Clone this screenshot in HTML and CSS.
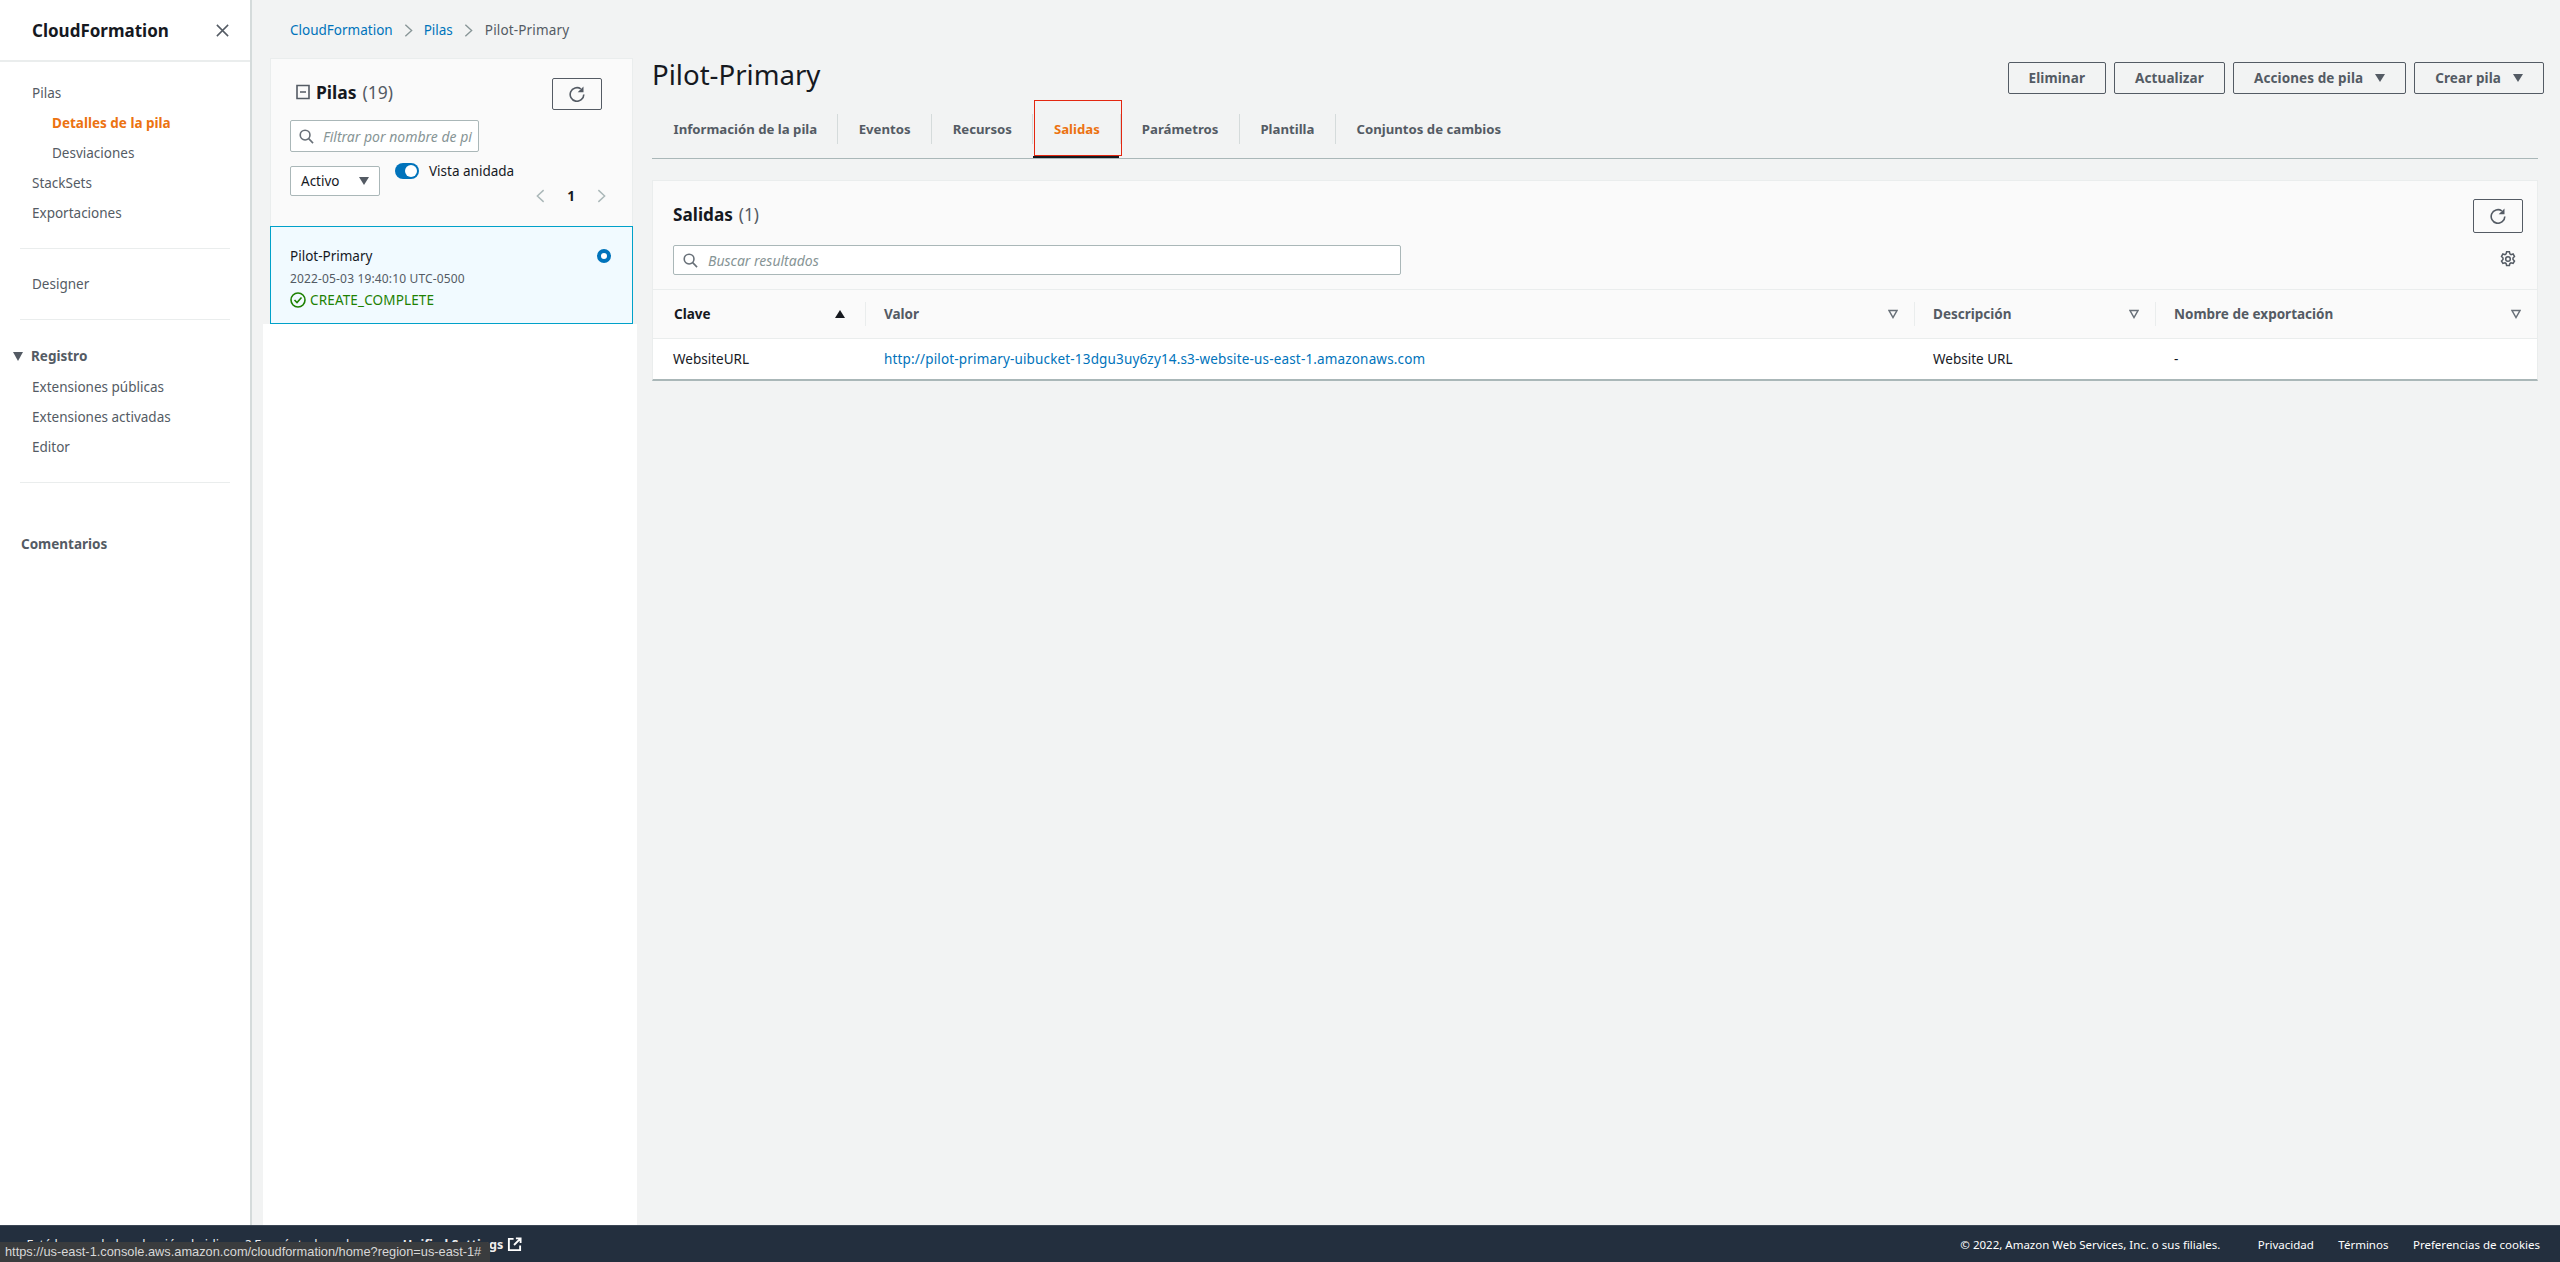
FILE: index.html
```html
<!DOCTYPE html>
<html lang="es">
<head>
<meta charset="utf-8">
<title>CloudFormation - Pilot-Primary</title>
<link rel="stylesheet" href="styles.css">
</head>
<body>
<div class="app">
  <div class="main">
    <aside class="side">
      <div class="side-head">
        <span class="side-title">CloudFormation</span>
        <svg class="close" viewBox="0 0 16 16"><path d="M2 2l12 12M14 2L2 14"/></svg>
      </div>
      <nav class="side-nav">
        <a class="nav-item">Pilas</a>
        <a class="nav-item sub active">Detalles de la pila</a>
        <a class="nav-item sub">Desviaciones</a>
        <a class="nav-item">StackSets</a>
        <a class="nav-item">Exportaciones</a>
        <hr class="nav-div">
        <a class="nav-item">Designer</a>
        <hr class="nav-div">
        <div class="nav-group"><span class="tri"></span>Registro</div>
        <a class="nav-item">Extensiones públicas</a>
        <a class="nav-item">Extensiones activadas</a>
        <a class="nav-item">Editor</a>
        <hr class="nav-div third">
        <div class="nav-feedback">Comentarios</div>
      </nav>
    </aside>
    <div class="content">
      <div class="crumbs">
        <a class="link">CloudFormation</a>
        <svg class="crumb-sep" viewBox="0 0 10 16"><path d="M1.500 1.500L8.500 8l-7 6.500"/></svg>
        <a class="link">Pilas</a>
        <svg class="crumb-sep" viewBox="0 0 10 16"><path d="M1.500 1.500L8.500 8l-7 6.500"/></svg>
        <span class="crumb-now">Pilot-Primary</span>
      </div>
      <div class="columns">
        <section class="stacks">
          <div class="stacks-head">
            <div class="stacks-top">
              <h2 class="stacks-title">
                <svg class="collapse" viewBox="0 0 14 16"><path d="M1 1.500h12v13H1zM4 8h6"/></svg>
                <b>Pilas</b><span class="count">(19)</span>
              </h2>
              <button class="icon-btn stack-refresh">
                <svg class="refresh" viewBox="0 0 16 16"><path d="M14.800 8.500A6.800 6.800 0 1 1 11.800 2.800"/><path class="fill" d="M14.500 .5v5.800H8.700z"/></svg>
              </button>
            </div>
            <div class="field filter">
              <svg class="search" viewBox="0 0 16 16"><circle cx="6.500" cy="6.500" r="5.200"/><path d="M10.300 10.300L15 15"/></svg>
              <span class="placeholder">Filtrar por nombre de pi</span>
            </div>
            <div class="controls">
              <div class="field select">Activo<span class="tri"></span></div>
              <div class="toggle-col">
                <div class="toggle-row"><span class="toggle"></span>Vista anidada</div>
                <div class="pager">
                  <svg class="pg" viewBox="0 0 10 16"><path d="M8.500 1.500L1.500 8l7 6.500"/></svg>
                  <b>1</b>
                  <svg class="pg" viewBox="0 0 10 16"><path d="M1.500 1.500L8.500 8l-7 6.500"/></svg>
                </div>
              </div>
            </div>
          </div>
          <div class="stack-item">
            <div class="item-name"><span>Pilot-Primary</span><span class="radio"></span></div>
            <div class="item-date">2022-05-03 19:40:10 UTC-0500</div>
            <div class="item-status">
              <svg class="ok" viewBox="0 0 16 16"><circle cx="8" cy="8" r="7"/><path d="M4.500 8l2.500 2.500L11.500 5.500"/></svg>
              CREATE_COMPLETE
            </div>
          </div>
          <div class="stacks-blank"></div>
        </section>
        <section class="detail">
          <div class="page-head">
            <h1 class="page-title">Pilot-Primary</h1>
            <div class="actions">
              <button class="btn">Eliminar</button>
              <button class="btn">Actualizar</button>
              <button class="btn">Acciones de pila<span class="tri"></span></button>
              <button class="btn">Crear pila<span class="tri"></span></button>
            </div>
          </div>
          <div class="tabs">
            <a class="tab first">Información de la pila</a>
            <a class="tab">Eventos</a>
            <a class="tab">Recursos</a>
            <a class="tab on">Salidas<span class="red-box"></span></a>
            <a class="tab">Parámetros</a>
            <a class="tab">Plantilla</a>
            <a class="tab last">Conjuntos de cambios</a>
          </div>
          <div class="card">
            <div class="card-head">
              <div class="card-left">
                <h2 class="card-title"><b>Salidas</b><span class="count">(1)</span></h2>
                <div class="field result-search">
                  <svg class="search" viewBox="0 0 16 16"><circle cx="6.500" cy="6.500" r="5.200"/><path d="M10.300 10.300L15 15"/></svg>
                  <span class="placeholder">Buscar resultados</span>
                </div>
              </div>
              <div class="card-right">
                <button class="icon-btn card-refresh">
                  <svg class="refresh" viewBox="0 0 16 16"><path d="M14.800 8.500A6.800 6.800 0 1 1 11.800 2.800"/><path class="fill" d="M14.500 .5v5.800H8.700z"/></svg>
                </button>
                <svg class="gear" viewBox="0 0 16 16"><circle cx="8" cy="8" r="2.300"/><path d="M6.600 .8h2.800l.5 2.100 1.100.7 2.100-.6 1.400 2.400-1.500 1.600v1.400l1.500 1.600-1.400 2.400-2.100-.6-1.100.7-.5 2.100H6.600l-.5-2.100-1.100-.7-2.100.6L1.500 10l1.500-1.600V7L1.500 5.400l1.400-2.400 2.100.6 1.100-.7z"/></svg>
              </div>
            </div>
            <div class="table">
              <div class="cell th dark">Clave<span class="sort"></span></div>
              <div class="cell th sep">Valor<svg class="filt" viewBox="0 0 10 10"><path d="M1 1.500h8L5 8.500z"/></svg></div>
              <div class="cell th sep">Descripción<svg class="filt" viewBox="0 0 10 10"><path d="M1 1.500h8L5 8.500z"/></svg></div>
              <div class="cell th sep">Nombre de exportación<svg class="filt" viewBox="0 0 10 10"><path d="M1 1.500h8L5 8.500z"/></svg></div>
              <div class="cell td key">WebsiteURL</div>
              <div class="cell td"><a class="link url">http://pilot-primary-uibucket-13dgu3uy6zy14.s3-website-us-east-1.amazonaws.com</a></div>
              <div class="cell td">Website URL</div>
              <div class="cell td">-</div>
            </div>
          </div>
        </section>
      </div>
    </div>
  </div>
  <footer class="foot">
    <div class="foot-left">¿Está buscando la selección de idioma? Encuéntrela en la nueva <b>Unified Settings</b>
      <svg class="ext" viewBox="0 0 16 16"><path d="M7 2H2v12h12V9M9.500 1.500h5v5M14 2L7.500 8.500"/></svg>
    </div>
    <div class="foot-right">
      <span class="copy">© 2022, Amazon Web Services, Inc. o sus filiales.</span>
      <a>Privacidad</a>
      <a>Términos</a>
      <a>Preferencias de cookies</a>
    </div>
    <div class="status-url">https://us-east-1.console.aws.amazon.com/cloudformation/home?region=us-east-1#</div>
  </footer>
</div>
</body>
</html>
```

FILE: styles.css
```css
* { box-sizing: border-box; }
html, body { margin: 0; height: 100%; }
body { font-family: "Noto Sans", Roboto, "Liberation Sans", sans-serif; font-size: 13.5px; color: #16191f; background: #f2f3f3; }
svg { display: block; flex: none; }
h1, h2 { margin: 0; font-weight: 400; }
.app { height: 1262px; display: flex; flex-direction: column; overflow: hidden; }
.main { flex: 1; display: flex; min-height: 0; }
.link { color: #0073bb; }
.url { letter-spacing: .16px; }

.side { width: 252px; flex: none; background: #fff; border-right: 2px solid #d5dbdb; }
.side-head { height: 62px; padding: 0 20px 0 32px; display: flex; align-items: center; justify-content: space-between; border-bottom: 2px solid #eaeded; }
.side-title { font-size: 17px; font-weight: 700; color: #16191f; }
.close { width: 15px; height: 15px; fill: none; stroke: #545b64; stroke-width: 1.600; }
.side-nav { padding-top: 16px; display: flex; flex-direction: column; }
.nav-item { height: 30px; line-height: 30px; padding-left: 32px; color: #545b64; }
.nav-item.sub { padding-left: 52px; }
.nav-item.active { color: #ec7211; font-weight: 700; }
.nav-div { width: 210px; margin: 20px 0 20px 20px; border: 0; border-top: 1px solid #eaeded; height: 1px; flex: none; }
.nav-div.third { margin-bottom: 46px; }
.nav-group { height: 30px; display: flex; align-items: center; gap: 8px; padding-left: 13px; font-weight: 700; color: #545b64; margin: 1px 0; }
.nav-group .tri { margin: 0; }
.nav-feedback { height: 30px; line-height: 30px; padding-left: 21px; font-weight: 700; color: #545b64; }
.tri { display: inline-block; width: 0; height: 0; border-left: 5px solid transparent; border-right: 5px solid transparent; border-top: 9px solid #545b64; }

.content { flex: 1; min-width: 0; display: flex; flex-direction: column; }
.crumbs { height: 58px; padding: 2px 0 0 38px; display: flex; align-items: center; gap: 11px; color: #545b64; }
.crumb-sep { width: 9px; height: 15px; fill: none; stroke: #879596; stroke-width: 1.500; }
.crumb-now { margin-left: 1px; letter-spacing: .15px; }
.columns { flex: 1; display: flex; min-height: 0; padding-left: 11px; }

.stacks { width: 374px; flex: none; display: flex; flex-direction: column; }
.stacks-head { margin: 0 4px 0 7px; height: 168px; padding: 19px 30px 0 19px; background: #fafafa; border: 1px solid #eaeded; border-bottom: 0; }
.stacks-top { display: flex; justify-content: space-between; align-items: flex-start; }
.stacks-title { display: flex; align-items: center; gap: 6px; padding: 2px 0 0 6px; font-size: 17.5px; line-height: 24px; }
.count { color: #545b64; }
.collapse { width: 14px; height: 16px; fill: none; stroke: #545b64; stroke-width: 1.600; }
.icon-btn { padding: 0; background: #fff0; border: 1px solid #545b64; border-radius: 2px; display: flex; align-items: center; justify-content: center; }
.stack-refresh { width: 50px; height: 32px; }
.card-refresh { width: 50px; height: 34px; }
.refresh { width: 16px; height: 16px; fill: none; stroke: #545b64; stroke-width: 1.600; }
.refresh .fill { fill: #545b64; stroke: none; }
.field { background: #fff; border: 1px solid #aab7b8; border-radius: 2px; display: flex; align-items: center; }
.filter { width: 189px; height: 32px; margin-top: 10px; padding: 0 8px; gap: 9px; }
.search { width: 15px; height: 15px; fill: none; stroke: #687078; stroke-width: 1.700; }
.placeholder { color: #879596; font-style: italic; font-size: 14px; white-space: nowrap; }
.controls { display: flex; gap: 15px; margin-top: 11px; }
.select { width: 90px; height: 30px; margin-top: 3px; padding: 0 10px; justify-content: space-between; }
.select .tri { border-top-width: 8px; }
.toggle-col { flex: 1; }
.toggle-row { display: flex; align-items: center; gap: 10px; height: 16px; }
.toggle { position: relative; width: 24px; height: 16px; border-radius: 8px; background: #0073bb; }
.toggle::after { content: ""; position: absolute; right: 2px; top: 2px; width: 12px; height: 12px; border-radius: 50%; background: #fff; }
.pager { display: flex; justify-content: flex-end; align-items: center; gap: 22px; margin: 8px -4px 0 0; }
.pager b { font-size: 13.5px; }
.pg { width: 9px; height: 16px; fill: none; stroke: #aab7b8; stroke-width: 1.600; }

.stack-item { margin: 0 4px 0 7px; height: 98px; padding: 19px 12px 0 19px; background: #f1faff; border: 1px solid #00a1c9; }
.item-name { display: flex; justify-content: space-between; align-items: center; height: 20px; }
.radio { width: 14px; height: 14px; border-radius: 50%; border: 4px solid #0073bb; background: #fff; margin-right: 9px; }
.item-date { font-size: 12px; letter-spacing: .15px; color: #545b64; margin-top: 5px; line-height: 16px; }
.item-status { display: flex; align-items: center; gap: 4px; letter-spacing: .15px; color: #1d8102; margin-top: 4px; height: 18px; }
.ok { width: 16px; height: 16px; fill: none; stroke: #1d8102; stroke-width: 1.600; }
.stacks-blank { flex: 1; background: #fff; }

.detail { flex: 1; min-width: 0; padding: 0 22px 0 15px; }
.page-head { display: flex; justify-content: space-between; margin-right: -6px; height: 42px; }
.page-title { font-size: 27.600px; line-height: 34px; margin-top: -1px; }
.actions { display: flex; gap: 8px; margin-top: 4px; height: 32px; }
.btn { height: 32px; padding: 0 20px; background: #fff0; border: 1px solid #545b64; border-radius: 2px; font: 700 13.5px "Noto Sans", Roboto, sans-serif; letter-spacing: .1px; color: #545b64; display: flex; align-items: center; gap: 12px; }
.btn .tri { border-top-width: 8px; }
.tabs { display: flex; height: 59px; padding-top: 14px; border-bottom: 1px solid #aab7b8; }
.tab { position: relative; height: 30px; line-height: 30px; padding: 0 20.500px; font-size: 13.200px; font-weight: 700; color: #545b64; border-right: 1px solid #d5dbdb; }
.tab.first { padding-left: 21.500px; padding-right: 20px; }
.tab.last { border: 0; }
.tab.on { color: #ec7211; }
.tab.on::after { content: ""; position: absolute; left: 0; right: 1px; top: 42px; height: 2px; background: #16191f; }
.red-box { position: absolute; left: 1px; right: -2px; top: -14px; height: 56px; border: 1px solid #e3260f; }
.card { margin-top: 21px; background: #fff; border: 1px solid #eaeded; border-bottom: 2px solid #aab7b8; }
.card-head { height: 109px; padding: 18px 14px 0 20px; background: #fafafa; display: flex; justify-content: space-between; border-bottom: 1px solid #eaeded; }
.card-title { font-size: 17.200px; line-height: 24px; display: flex; gap: 6px; margin-top: 4px; }
.result-search { width: 728px; height: 30px; margin-top: 18px; padding: 0 9px; gap: 10px; }
.card-right { display: flex; flex-direction: column; align-items: flex-end; }
.gear { width: 16px; height: 16px; margin: 18px 7px 0 0; fill: none; stroke: #545b64; stroke-width: 1.500; }
.table { display: grid; grid-template-columns: 212px 1049px 241px 1fr; }
.cell { display: flex; align-items: center; padding-left: 19px; }
.th { height: 49px; background: #fafafa; font-weight: 700; color: #545b64; border-bottom: 1px solid #eaeded; position: relative; justify-content: space-between; padding-right: 16px; }
.th.dark { color: #16191f; padding-left: 21px; padding-right: 20px; }
.th.sep::before { content: ""; position: absolute; left: 0; top: 12px; height: 24px; border-left: 1px solid #eaeded; }
.td { height: 40px; }
.td.key { padding-left: 20px; }
.sort { width: 0; height: 0; border-left: 5px solid transparent; border-right: 5px solid transparent; border-bottom: 8px solid #16191f; }
.filt { width: 10px; height: 10px; fill: none; stroke: #687078; stroke-width: 1.500; }

.foot { position: relative; flex: none; height: 37px; background: #232f3e; border-top: 1px solid #3b4654; color: #fff; font-size: 11.500px; display: flex; align-items: center; justify-content: space-between; padding: 1px 20px 0 21px; }
.foot-left { display: flex; align-items: center; gap: 4px; font-size: 12.600px; white-space: pre-wrap; color: #eee; }
.ext { width: 15px; height: 15px; fill: none; stroke: #fff; stroke-width: 2; }
.foot-right { display: flex; align-items: center; gap: 24.500px; }
.foot-right .copy { margin-right: 13px; }
.status-url { position: absolute; left: 0; bottom: 0; width: 490px; height: 20px; padding-left: 5px; background: #3a3c3e; color: #d8d8d8; font: 12.8px/20px "Liberation Sans", sans-serif; border-radius: 0 3px 0 0; white-space: nowrap; overflow: hidden; }
```
